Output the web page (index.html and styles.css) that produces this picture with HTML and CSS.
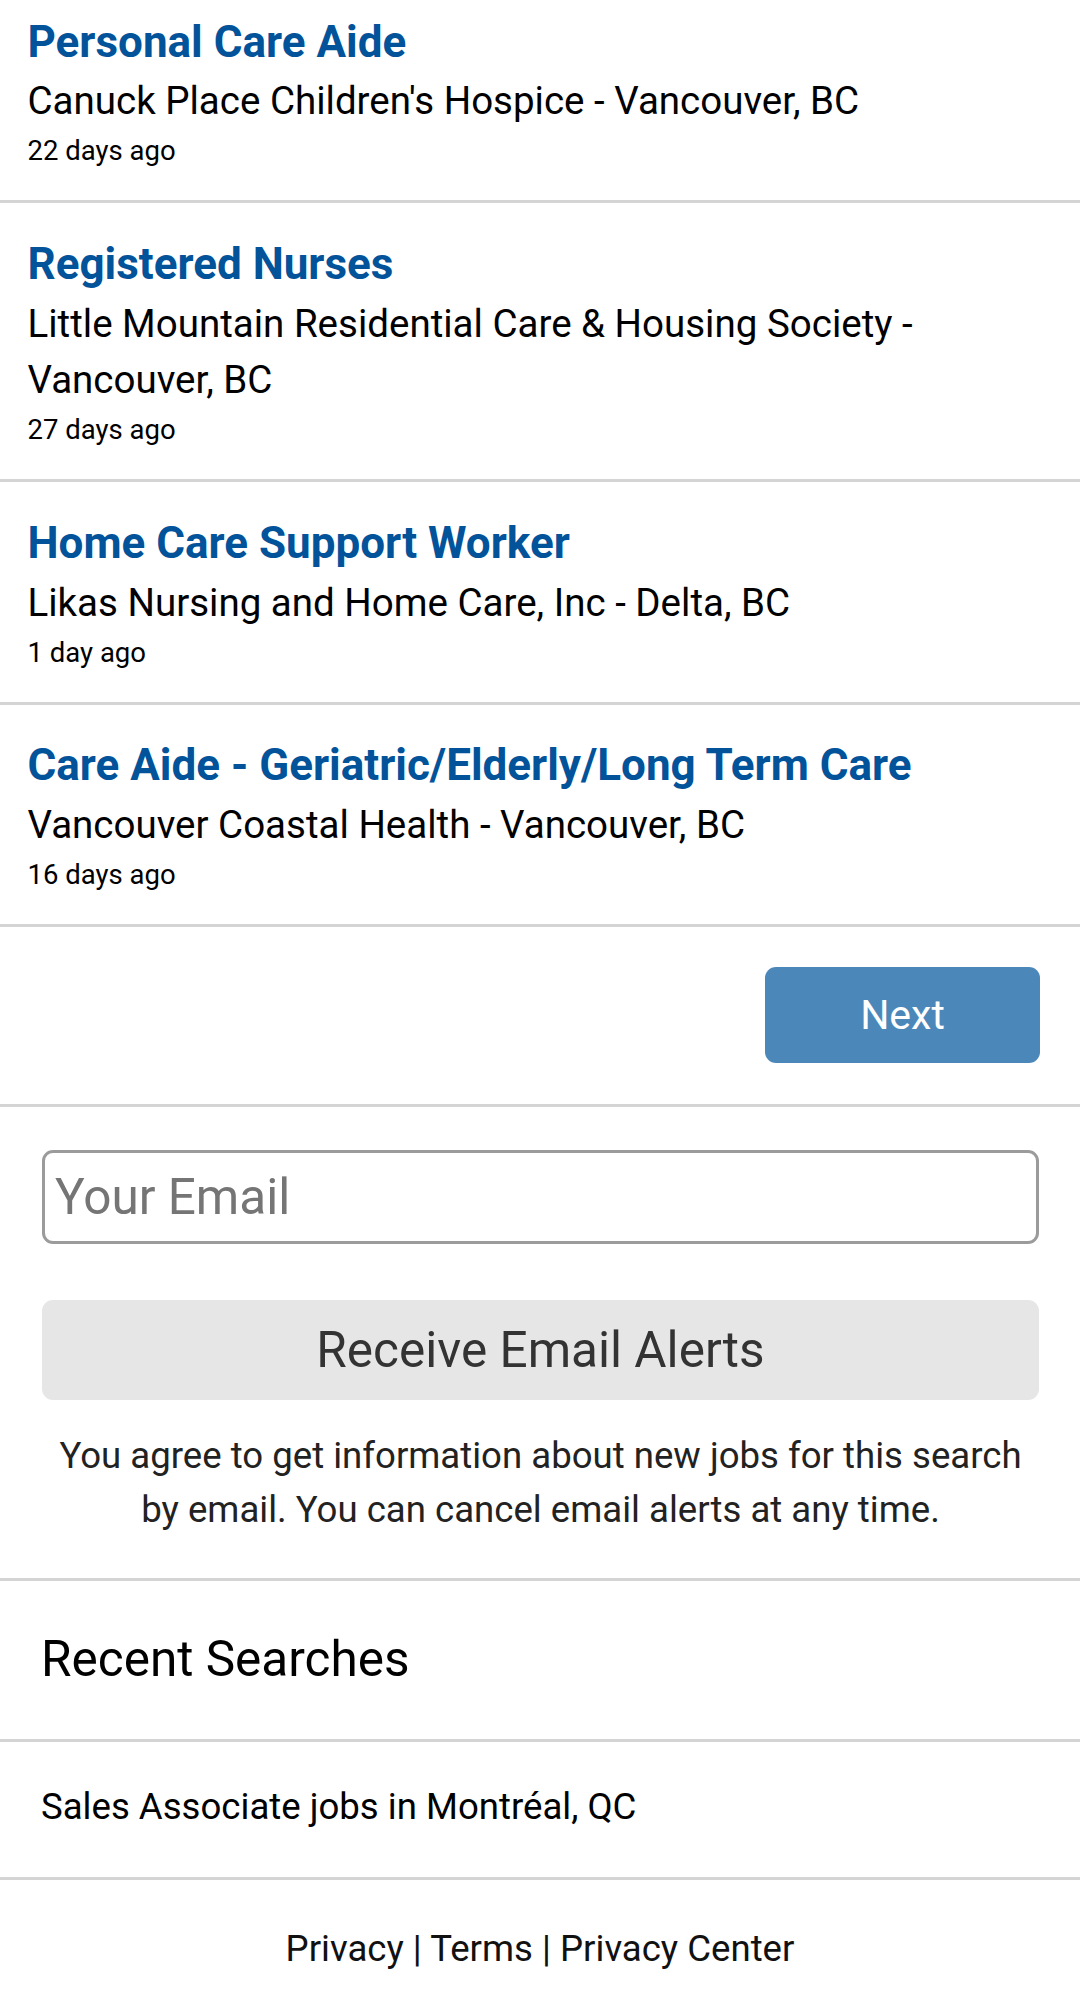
FILE: index.html
```html
<!DOCTYPE html>
<html lang="en">
<head>
    <meta charset="UTF-8">
    <meta name="viewport" content="width=device-width, initial-scale=1.0">
    <title>Care Aide Jobs - Vancouver, BC</title>
    <link rel="stylesheet" href="styles.css">
</head>
<body>
    <div class="page">
        <ul class="job-list">
            <li class="job">
                <a class="job-title" href="#">Personal Care Aide</a>
                <div class="job-company">Canuck Place Children's Hospice - Vancouver, BC</div>
                <div class="job-date">22 days ago</div>
            </li>
            <li class="job">
                <a class="job-title" href="#">Registered Nurses</a>
                <div class="job-company">Little Mountain Residential Care &amp; Housing Society - Vancouver, BC</div>
                <div class="job-date">27 days ago</div>
            </li>
            <li class="job">
                <a class="job-title" href="#">Home Care Support Worker</a>
                <div class="job-company">Likas Nursing and Home Care, Inc - Delta, BC</div>
                <div class="job-date">1 day ago</div>
            </li>
            <li class="job">
                <a class="job-title" href="#">Care Aide - Geriatric/Elderly/Long Term Care</a>
                <div class="job-company">Vancouver Coastal Health - Vancouver, BC</div>
                <div class="job-date">16 days ago</div>
            </li>
        </ul>

        <div class="pager">
            <a class="next-btn" href="#">Next</a>
        </div>

        <form class="alerts" onsubmit="return false;">
            <input type="email" class="email-input" placeholder="Your Email">
            <button type="button" class="alert-btn">Receive Email Alerts</button>
            <p class="alert-note">You agree to get information about new jobs for this search by email. You can cancel email alerts at any time.</p>
        </form>

        <h2 class="recent-title">Recent Searches</h2>
        <a class="recent-item" href="#">Sales Associate jobs in Montréal, QC</a>

        <footer class="footer">
            <a href="#">Privacy</a> | <a href="#">Terms</a> | <a href="#">Privacy Center</a>
        </footer>
    </div>
</body>
</html>
```

FILE: styles.css
```css
* {
    margin: 0;
    padding: 0;
    box-sizing: border-box;
}

body {
    font-family: Roboto, 'Noto Sans', sans-serif;
    background: #fff;
    color: #000;
    overflow: hidden;
}

/* page is scrolled a little past the top of the first result */
.page {
    margin-top: -19px;
}

.job-list {
    list-style: none;
}

.job {
    padding: 29.5px 27.5px 29px;
    border-bottom: 3px solid #d4d4d4;
}

.job-title {
    display: block;
    font-size: 44px;
    font-weight: 700;
    line-height: 62.9px;
    color: #03539a;
    text-decoration: none;
}

.job-company {
    font-size: 38.5px;
    line-height: 56.7px;
}

.job-date {
    font-size: 27.5px;
    line-height: 41.25px;
}

.pager {
    display: flex;
    justify-content: flex-end;
    padding: 40px 40px 41px;
    border-bottom: 3px solid #d4d4d4;
}

.next-btn {
    display: flex;
    align-items: center;
    justify-content: center;
    width: 275px;
    height: 96px;
    background: #4b88b9;
    border-radius: 11px;
    color: #fff;
    font-size: 41px;
    text-decoration: none;
}

.alerts {
    padding: 43px 41px 0 42px;
    border-bottom: 3px solid #d4d4d4;
}

.email-input {
    display: block;
    width: 100%;
    height: 94px;
    padding: 0 10px;
    border: 3px solid #9b9b9b;
    border-radius: 11px;
    font-family: Roboto, 'Noto Sans', sans-serif;
    font-size: 49.5px;
    color: #333;
    outline: none;
}

.email-input::placeholder {
    color: #757575;
}

.alert-btn {
    display: block;
    width: 100%;
    height: 100px;
    margin-top: 56px;
    border: none;
    border-radius: 11px;
    background: #e6e6e6;
    font-family: Roboto, 'Noto Sans', sans-serif;
    font-size: 49.5px;
    color: #333;
    cursor: pointer;
}

.alert-note {
    margin-top: 29px;
    padding-bottom: 41.8px;
    font-size: 36.6px;
    line-height: 53.6px;
    text-align: center;
    color: #222;
}

.recent-title {
    padding: 49px 41px;
    font-size: 49.5px;
    font-weight: 400;
    line-height: 59.4px;
    border-bottom: 3px solid #d4d4d4;
}

.recent-item {
    display: block;
    padding: 38.5px 41px 42.5px;
    font-size: 36.6px;
    line-height: 54.75px;
    color: #000;
    text-decoration: none;
    border-bottom: 3px solid #d4d4d4;
}

.footer {
    padding: 39.5px 0 40px;
    font-size: 36.6px;
    line-height: 57.75px;
    text-align: center;
    color: #111;
}

.footer a {
    color: #111;
    text-decoration: none;
}
```
